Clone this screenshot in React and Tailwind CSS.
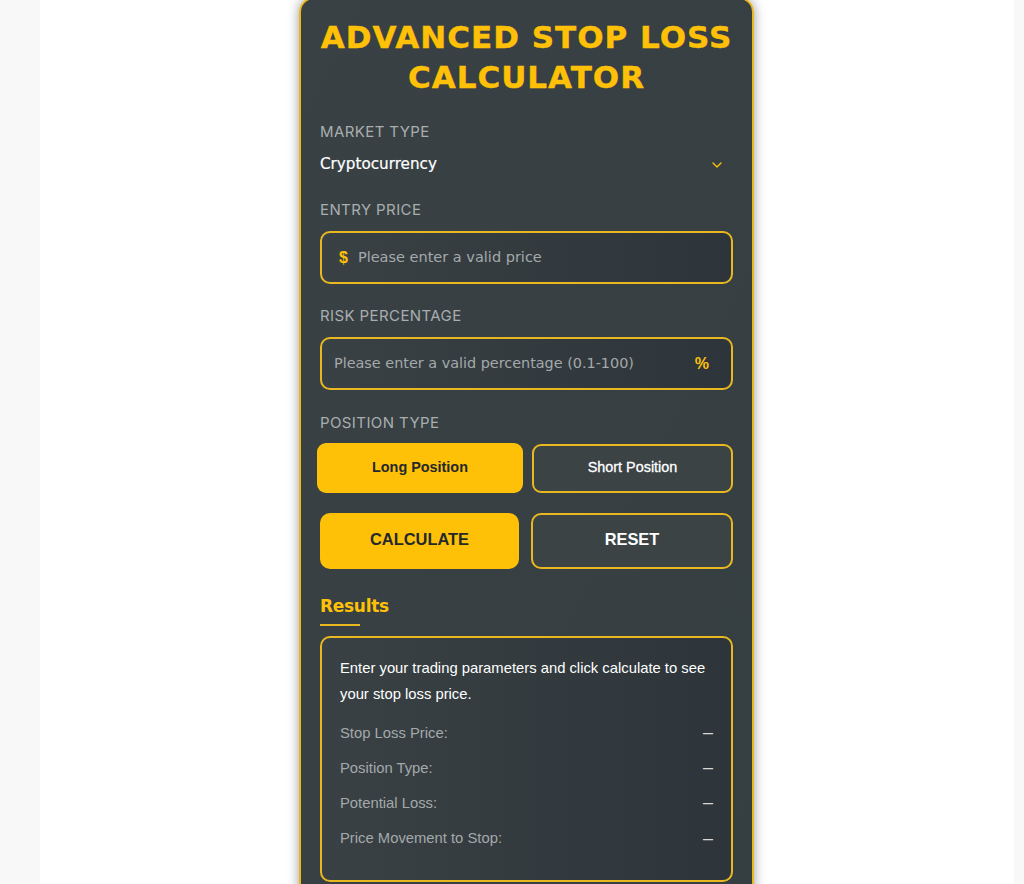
import { ChevronDown } from "lucide-react";

const rows = ["Stop Loss Price:", "Position Type:", "Potential Loss:", "Price Movement to Stop:"];

export default function App() {
  return (
    <div className="h-[884px] overflow-hidden bg-[#f8f8f8] pl-[40px] pr-[10px] font-['Liberation_Sans',sans-serif]">
      <div className="h-full bg-white pt-px pr-px">
        <div className="mx-auto -mt-[4px] box-border w-[455px] rounded-[15px] border-2 border-[#e9b820] bg-linear-to-br from-[#394144] to-[#353e41] px-[19px] pt-[18px] pb-[20px] shadow-[0_0_12px_rgba(0,0,0,0.4)]">
          <h1 className="mb-[25px] text-center font-['DejaVu_Sans',sans-serif] text-[31px] leading-[40px] font-bold tracking-[1px] text-[#ffc107] [-webkit-text-stroke:0.4px_#ffc107]">
            ADVANCED STOP LOSS CALCULATOR
          </h1>

          <label className="block font-['Inter',sans-serif] text-[15px] leading-[20px] tracking-[0.4px] text-[#a9aeb0]">MARKET TYPE</label>
          <div className="relative mt-[7px] mb-[21px]">
            <select className="block h-[30px] w-full appearance-none bg-transparent pt-px font-['DejaVu_Sans',sans-serif] text-[15.2px] text-white outline-none [-webkit-text-stroke:0.2px_white]">
              <option className="text-black">Cryptocurrency</option>
            </select>
            <ChevronDown size={16} strokeWidth={2} className="pointer-events-none absolute top-[8px] right-[8px] text-[#ffc107]" />
          </div>

          <label className="block font-['Inter',sans-serif] text-[15px] leading-[20px] tracking-[0.4px] text-[#a9aeb0]">ENTRY PRICE</label>
          <div className="mt-[11px] mb-[22px] flex h-[53px] items-center rounded-[10px] border-2 border-[#e9b820] bg-linear-to-r from-[#394144] to-[#2d353a] pl-[17px]">
            <span className="mr-[10px] text-[16px] font-bold text-[#ffc107]">$</span>
            <input placeholder="Please enter a valid price" className="w-full bg-transparent font-['DejaVu_Sans',sans-serif] text-[14.5px] text-white outline-none placeholder:text-[#a4a9ab]" />
          </div>

          <label className="block font-['Inter',sans-serif] text-[15px] leading-[20px] tracking-[0.4px] text-[#a9aeb0]">RISK PERCENTAGE</label>
          <div className="mt-[11px] mb-[23px] flex h-[53px] items-center rounded-[10px] border-2 border-[#e9b820] bg-linear-to-r from-[#394144] to-[#2d353a] pr-[22px] pl-[12px]">
            <input placeholder="Please enter a valid percentage (0.1-100)" className="w-full bg-transparent font-['DejaVu_Sans',sans-serif] text-[14.4px] text-white outline-none placeholder:text-[#a4a9ab]" />
            <span className="ml-2 text-[16px] font-bold text-[#ffc107]">%</span>
          </div>

          <label className="block font-['Inter',sans-serif] text-[15px] leading-[20px] tracking-[0.4px] text-[#a9aeb0]">POSITION TYPE</label>
          <div className="mt-[10px] flex items-center gap-[9px]">
            <button className="-ml-[3px] h-[50px] w-[206px] rounded-[9px] bg-[#ffc107] text-[14.4px] font-bold text-[#23282b]">Long Position</button>
            <button className="h-[49px] flex-1 rounded-[9px] border-2 border-[#e9b820] bg-[#3b4345] text-[14.4px] text-white [-webkit-text-stroke:0.3px_white]">Short Position</button>
          </div>

          <div className="mt-[20px] flex gap-[12px]">
            <button className="h-[56px] w-[199px] rounded-[10px] bg-[#ffc107] pb-[3px] text-[16.4px] font-bold text-[#23282b]">CALCULATE</button>
            <button className="h-[56px] flex-1 rounded-[10px] border-2 border-[#e9b820] bg-[#3b4345] pb-[3px] text-[16.4px] font-bold text-white">RESET</button>
          </div>

          <h2 className="mt-[25px] font-['DejaVu_Sans',sans-serif] text-[17px] leading-[24px] font-bold tracking-[-0.3px] text-[#ffc107]">Results</h2>
          <div className="mt-[6px] h-[2px] w-[40px] bg-[#e9b820]" />

          <div className="mt-[10px] h-[246px] rounded-[10px] border-2 border-[#e9b820] bg-linear-to-r from-[#394144] to-[#2d353a] px-[18px] pt-[17px]">
            <p className="text-[14.8px] leading-[26px] text-white">Enter your trading parameters and click calculate to see your stop loss price.</p>
            <div className="mt-[8px]">
              {rows.map((r) => (
                <div key={r} className="flex h-[35.2px] items-center justify-between text-[14.8px] text-[#a4a9ab]">
                  <span>{r}</span>
                  <span className="text-[18px] text-[#d5d7d8]">–</span>
                </div>
              ))}
            </div>
          </div>
        </div>
      </div>
    </div>
  );
}
